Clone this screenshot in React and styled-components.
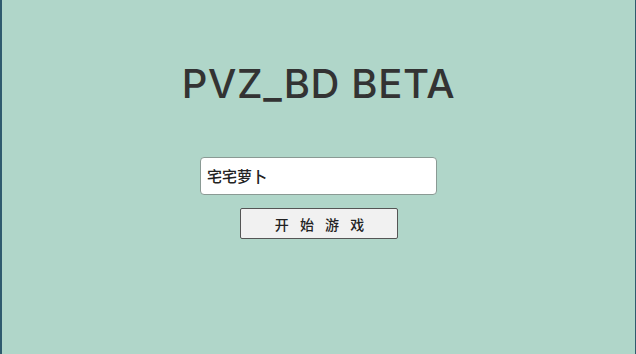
import React from "react";
import styled, { createGlobalStyle } from "styled-components";

const Global = createGlobalStyle`
  html, body {
    margin: 0;
    padding: 0;
    background: #b0d6c9;
  }
`;

const Screen = styled.div`
  box-sizing: border-box;
  width: 636px;
  height: 354px;
  background: #b0d6c9;
  border-left: 2px solid #2f5b6e;
  border-right: 1px solid #2f5b6e;
  display: flex;
  flex-direction: column;
  align-items: center;
  font-family: "Noto Sans CJK SC", sans-serif;
`;

const Title = styled.h1`
  margin: 61px 0 0;
  font-family: Inter, "Open Sans", sans-serif;
  font-weight: 450;
  font-size: 40px;
  line-height: 46px;
  color: #333;
  letter-spacing: 0.6px;
`;

const NameInput = styled.input`
  box-sizing: border-box;
  margin-top: 50px;
  width: 237px;
  height: 38px;
  padding: 0 6px 2px;
  background: #fff;
  border: 1px solid #8a9a94;
  border-radius: 4px;
  font-family: "Noto Sans CJK SC", sans-serif;
  font-size: 15px;
  font-weight: 500;
  color: #222;
  outline: none;
`;

const StartButton = styled.button`
  box-sizing: border-box;
  margin-top: 13px;
  width: 158px;
  height: 31px;
  background: #f1f1f1;
  border: 1px solid #555;
  border-radius: 2px;
  font-family: "Noto Sans CJK SC", sans-serif;
  font-size: 14px;
  font-weight: 500;
  color: #222;
  letter-spacing: 2px;
  word-spacing: 4px;
  padding: 0 0 0 4px;
  cursor: pointer;
`;

export default function App() {
  return (
    <>
      <Global />
      <Screen>
        <Title>PVZ_BD BETA</Title>
        <NameInput defaultValue="宅宅萝卜" />
        <StartButton>开 始 游 戏</StartButton>
      </Screen>
    </>
  );
}
